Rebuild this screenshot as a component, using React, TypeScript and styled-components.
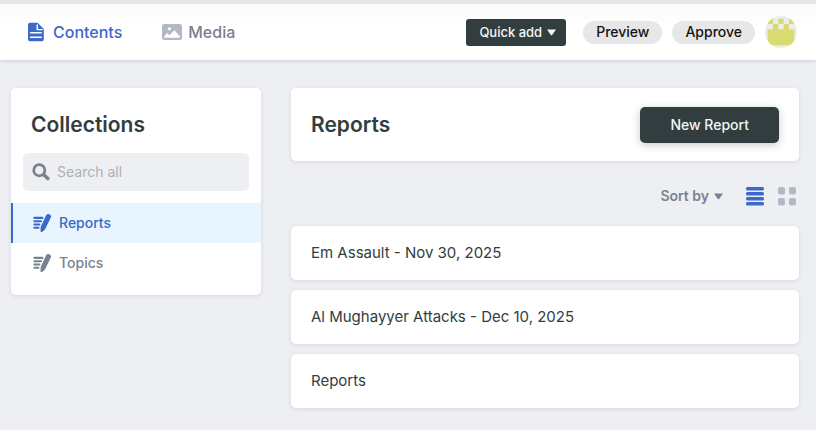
import React, { useState } from 'react';
import styled, { createGlobalStyle } from 'styled-components';

const color = {
  page: '#eeeff3',
  blue: '#3a69c7',
  blueLight: '#e8f4fe',
  dark: '#313d3e',
  gray: '#798291',
  navGray: '#7b808c',
  icon: '#b3b9c4',
};

const GlobalStyle = createGlobalStyle`
  *, *::before, *::after { box-sizing: border-box; }
  body {
    margin: 0;
    background: ${color.page};
    color: ${color.dark};
    font-family: Inter, "Liberation Sans", sans-serif;
    font-size: 15px;
    line-height: 20px;
  }
  button, input { font: inherit; }
  button { border: 0; cursor: pointer; }
  h1, h2, ul { margin: 0; padding: 0; }
  ul { list-style: none; }
  a { text-decoration: none; color: inherit; }
  svg { display: block; flex: none; }
`;

const Header = styled.header`
  display: flex;
  align-items: center;
  justify-content: space-between;
  height: 60px;
  padding: 0 19px 0 27px;
  border-top: 4px solid #e4e5ea;
  background: linear-gradient(#fafafa, #fff 24px);
  box-shadow: 0 1px 4px rgba(68, 74, 110, 0.2);
`;

const Nav = styled.nav`
  display: flex;
  align-items: center;
  gap: 40px;
`;

const NavLink = styled.a<{ $active?: boolean }>`
  display: flex;
  align-items: center;
  gap: ${(p) => (p.$active ? 8 : 6)}px;
  font-size: 16px;
  font-weight: 500;
  color: ${(p) => (p.$active ? color.blue : color.navGray)};
`;

const Actions = styled.div`
  display: flex;
  align-items: center;
`;

const QuickAdd = styled.button`
  display: flex;
  align-items: center;
  gap: 5px;
  height: 27px;
  margin-right: 17px;
  padding: 0 10px 0 13px;
  border-radius: 3px;
  background: ${color.dark};
  color: #f4f6f6;
  font-size: 13px;
  font-weight: 500;
`;

const Pill = styled.button`
  height: 23px;
  margin-right: 10px;
  padding: 0 13px;
  border-radius: 12px;
  background: #e7e7e8;
  color: #141414;
  font-size: 14px;
  font-weight: 500;
`;

const AvatarButton = styled.button`
  padding: 0;
  border-radius: 50%;
  overflow: hidden;
  background: #ececec;
`;

const Page = styled.div`
  display: grid;
  grid-template-columns: 250px minmax(0, 1fr);
  align-items: start;
  gap: 30px;
  padding: 28px 17px 22px 11px;
`;

const Card = styled.div`
  border-radius: 5px;
  background: #fff;
  box-shadow: 0 1px 4px rgba(68, 74, 87, 0.14);
`;

const Sidebar = styled(Card).attrs({ as: 'aside' })`
  padding: 22px 0 12px;
`;

const Title = styled.h2`
  font-size: 21px;
  font-weight: 600;
  line-height: 30px;
`;

const SidebarTitle = styled(Title)`
  padding: 0 20px;
`;

const SearchBox = styled.label`
  display: flex;
  align-items: center;
  gap: 7px;
  height: 38px;
  margin: 13px 12px 12px;
  padding: 0 9px;
  border-radius: 5px;
  background: ${color.page};
  color: ${color.gray};
`;

const SearchInput = styled.input`
  flex: 1;
  min-width: 0;
  padding: 0;
  border: 0;
  outline: 0;
  background: transparent;
  font-size: 14px;
  color: ${color.dark};
  &::placeholder { color: #afb0b4; opacity: 1; }
`;

const CollectionLink = styled.a<{ $active?: boolean }>`
  display: flex;
  align-items: center;
  gap: 8px;
  height: 40px;
  padding: 0 20px;
  border-left: 2px solid ${(p) => (p.$active ? color.blue : 'transparent')};
  background: ${(p) => (p.$active ? color.blueLight : 'transparent')};
  color: ${(p) => (p.$active ? color.blue : color.gray)};
  font-size: 14px;
  font-weight: 500;
`;

const CollectionTop = styled(Card)`
  display: flex;
  align-items: center;
  justify-content: space-between;
  height: 73px;
  padding: 0 20px;
`;

const NewButton = styled.button`
  height: 36px;
  padding: 0 30px;
  border-radius: 5px;
  background: ${color.dark};
  color: #f4f6f6;
  font-size: 14px;
  font-weight: 500;
  box-shadow: 0 2px 8px rgba(49, 61, 62, 0.28);
`;

const Controls = styled.div`
  display: flex;
  align-items: center;
  justify-content: flex-end;
  height: 20px;
  margin: 25px 3px 20px 0;
`;

const SortButton = styled.button`
  display: flex;
  align-items: center;
  gap: 5px;
  margin-right: 23px;
  padding: 0;
  background: transparent;
  color: ${color.gray};
  font-size: 14px;
  font-weight: 600;
`;

const ViewButton = styled.button<{ $active: boolean }>`
  padding: 0;
  background: transparent;
  color: ${(p) => (p.$active ? color.blue : color.icon)};
  & + & { margin-left: 14px; }
`;

const Entries = styled.ul`
  display: grid;
  gap: 10px;
`;

const Entry = styled(Card).attrs({ as: 'a' })<{ href: string }>`
  display: flex;
  align-items: center;
  height: 54px;
  padding: 0 20px;
  font-weight: 400;
`;

const PageIcon = () => (
  <svg width="18" height="20" viewBox="0 0 18 20" aria-hidden="true">
    <path fill="currentColor" d="M3 .8h7.6L16.8 7v10.2a2 2 0 0 1-2 2H3a2 2 0 0 1-2-2V2.8a2 2 0 0 1 2-2z" />
    <path fill="none" stroke="#fff" strokeWidth="1.4" d="M10.2 3v4.6h5M3.5 10.8h10.8M3.5 15.2h10.8" strokeLinecap="round" />
  </svg>
);

const MediaIcon = () => (
  <svg width="20" height="16" viewBox="0 0 20 16" aria-hidden="true">
    <rect width="20" height="16" rx="2.5" fill={color.icon} />
    <circle cx="7.5" cy="4.7" r="1.5" fill="#fff" />
    <path fill="#fff" d="M2.2 13.8v-1.2l3-3.6 2.2 2.2 5-5 5.4 6v1.6z" />
  </svg>
);

const SearchIcon = () => (
  <svg width="18" height="18" viewBox="0 0 18 18" aria-hidden="true">
    <g fill="none" stroke="currentColor" strokeLinecap="round">
      <circle cx="7.3" cy="7.2" r="5.6" strokeWidth="2.7" />
      <path d="M11.8 11.7l4 3.9" strokeWidth="3.5" />
    </g>
  </svg>
);

const WriteIcon = () => (
  <svg width="18" height="18" viewBox="0 0 18 18" aria-hidden="true">
    <path fill="none" stroke="currentColor" strokeWidth="2.1" strokeLinecap="round" d="M1.4 3.9h8M1.4 7.2h6.6M1.4 10.5h5M1.4 13.8h4" />
    <path fill="currentColor" d="M13 1.6C13.8.1 15.2-.3 16.6.4s1.8 2 1.1 3.4l-5.6 11.5-3 2.6c-.7.5-1.6.1-1.6-.8l.2-4z" />
  </svg>
);

const ListIcon = () => (
  <svg width="18" height="19" viewBox="0 0 18 19" fill="currentColor" aria-hidden="true">
    {[0, 5, 10, 15].map((y) => <rect key={y} y={y} width="18" height="3.4" rx="1.5" />)}
  </svg>
);

const GridIcon = () => (
  <svg width="18" height="19" viewBox="0 0 18 19" fill="currentColor" aria-hidden="true">
    {[0, 11].map((y) => [0, 11].map((x) => <rect key={`${x}-${y}`} x={x} y={y} width="7" height="7.4" rx="2" />))}
  </svg>
);

const Caret = () => (
  <svg width="9" height="7" viewBox="0 0 9 7" aria-hidden="true">
    <path fill="currentColor" d="M.5.5h8q.6 0 .2.6L5.1 6q-.6.6-1.2 0L.3 1.1Q-.1.5.5.5z" />
  </svg>
);

const Identicon = () => (
  <svg width="32" height="32" viewBox="0 0 420 420" aria-hidden="true">
    <path fill="#d8dc70" d="M35 35h70v70h70V35h70v70h70V35h70v70h-70v70h70v210H35V175h70v-70H35zM175 105v70h70v-70z" fillRule="evenodd" />
  </svg>
);

const collections = ['Reports', 'Topics'];
const entries = ['Em Assault - Nov 30, 2025', 'Al Mughayyer Attacks - Dec 10, 2025', 'Reports'];

export default function App() {
  const [current, setCurrent] = useState('Reports');
  const [view, setView] = useState<'list' | 'grid'>('list');
  return (
    <>
      <GlobalStyle />
      <Header>
        <Nav>
          <NavLink href="#contents" $active><PageIcon />Contents</NavLink>
          <NavLink href="#media"><MediaIcon />Media</NavLink>
        </Nav>
        <Actions>
          <QuickAdd>Quick add<Caret /></QuickAdd>
          <Pill>Preview</Pill>
          <Pill>Approve</Pill>
          <AvatarButton aria-label="Account"><Identicon /></AvatarButton>
        </Actions>
      </Header>
      <Page>
        <Sidebar>
          <SidebarTitle>Collections</SidebarTitle>
          <SearchBox>
            <SearchIcon />
            <SearchInput type="text" placeholder="Search all" aria-label="Search all" />
          </SearchBox>
          <ul>
            {collections.map((name) => (
              <li key={name}>
                <CollectionLink href={`#${name.toLowerCase()}`} $active={name === current} onClick={() => setCurrent(name)}>
                  <WriteIcon />{name}
                </CollectionLink>
              </li>
            ))}
          </ul>
        </Sidebar>
        <main>
          <CollectionTop>
            <Title as="h1">Reports</Title>
            <NewButton>New Report</NewButton>
          </CollectionTop>
          <Controls>
            <SortButton>Sort by<Caret /></SortButton>
            <ViewButton $active={view === 'list'} aria-label="List view" onClick={() => setView('list')}><ListIcon /></ViewButton>
            <ViewButton $active={view === 'grid'} aria-label="Grid view" onClick={() => setView('grid')}><GridIcon /></ViewButton>
          </Controls>
          <Entries>
            {entries.map((entry) => <li key={entry}><Entry href="#entry">{entry}</Entry></li>)}
          </Entries>
        </main>
      </Page>
    </>
  );
}
